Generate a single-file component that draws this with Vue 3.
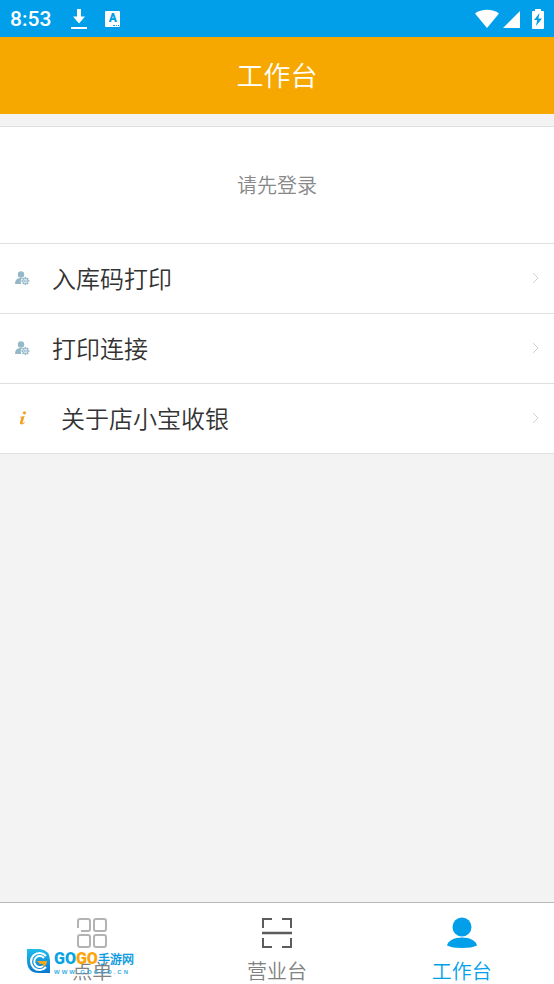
<script setup>
const rows = [
  { label: '入库码打印', icon: 'user' },
  { label: '打印连接', icon: 'user' },
  { label: '关于店小宝收银', icon: 'info' }
]
const teeth = [0, 45, 90, 135, 180, 225, 270, 315]
</script>

<template>
  <div class="app">
    <div class="status">
      <span class="time">8:53</span>
      <svg class="download" width="16" height="20" viewBox="0 0 16 20" fill="#fff">
        <path d="M6 0h4v7.500H14L8 14.500 2 7.500h4zM0 18h16v2H0z" />
      </svg>
      <span class="keyboard"><b>A</b><i></i></span>
      <svg class="signals" width="70" height="20" viewBox="0 0 70 20" fill="#fff">
        <path d="M0 4.500C6-.5 18-.5 24 4.500L12 19z" />
        <path d="M28 19 45 2v17z" />
        <path d="M58 2h2V0h6v2h2q1 0 1 1v16q0 1-1 1H58q-1 0-1-1V3q0-1 1-1z" />
        <path fill="#019fe9" d="m64.500 4-5.500 7h3.200L61 17l6-7.500h-3.600z" />
      </svg>
    </div>
    <header class="header"><h1>工作台</h1></header>
    <main class="main">
      <a class="login" href="#login">请先登录</a>
      <a v-for="row in rows" :key="row.label" class="row" :class="row.icon" href="#open">
        <svg v-if="row.icon === 'user'" class="row-icon" width="16" height="16" viewBox="0 0 16 16">
          <g fill="#94b8c8">
            <circle cx="7" cy="4.500" r="3.200" />
            <path d="M1 14q0-5.500 5-6h2.500q-2.500 2-1.500 5v1z" />
            <rect v-for="t in teeth" :key="t" x="10.600" y="7" width="1.600" height="2" :transform="`rotate(${t} 11.400 11)`" />
          </g>
          <circle cx="11.400" cy="11" r="2.500" fill="#fff" stroke="#94b8c8" />
          <circle cx="11.400" cy="11" r="1" fill="#fff" stroke="#94b8c8" />
        </svg>
        <svg v-else class="row-icon" width="16" height="16" viewBox="0 0 16 16" fill="#f5a11d">
          <circle cx="10.500" cy="2.800" r="1.600" />
          <path d="M6.300 6.700q2.300-.2 4.400-1L8.600 12.500q-.3 1 .5.600l1.400-1.400.5.400q-1.700 2.700-3.800 2.500-1.700-.3-1.200-2.300l1.300-4.600-1.100-.3z" />
        </svg>
        <span class="label">{{ row.label }}</span>
        <svg class="chevron" width="8" height="12" viewBox="0 0 8 12" fill="none" stroke="#d2d2d2">
          <path d="m1 1 5 5-5 5" />
        </svg>
      </a>
    </main>
    <nav class="tabs">
      <a class="tab" href="#order">
        <svg width="32" height="32" viewBox="0 0 32 32" fill="none" stroke="#b3b3b3" stroke-width="2">
          <path d="M2 11V4q0-2 2-2h8q2 0 2 2v8q0 2-2 2H5" />
          <rect x="18" y="2" width="12" height="12" rx="2" />
          <rect x="2" y="18" width="12" height="12" rx="2" />
          <rect x="18" y="18" width="12" height="12" rx="2" />
        </svg>
        <span>点单</span>
      </a>
      <a class="tab" href="#business">
        <svg width="32" height="32" viewBox="0 0 32 32" fill="none" stroke="#5d5b5c" stroke-width="2">
          <path d="M2 11V2h9M21 2h9v9M30 21v9h-9M11 30H2v-9" />
          <path d="M1 16h30" stroke-width="2.500" />
        </svg>
        <span>营业台</span>
      </a>
      <a class="tab active" href="#workbench">
        <svg width="32" height="32" viewBox="0 0 32 32" fill="#019fe9">
          <circle cx="16" cy="10" r="9.500" />
          <path d="M1 28.500C2 24 8 20.500 16 20.500S30 24 31 28.500Q26 31 16 31T1 28.500z" />
        </svg>
        <span>工作台</span>
      </a>
      <div class="mark">
        <svg width="25" height="25" viewBox="0 0 25 25">
          <defs>
            <linearGradient id="drop" x1="0" y1="0" x2="0" y2="1">
              <stop offset="0" stop-color="#21bce9" /><stop offset="1" stop-color="#0878cf" />
            </linearGradient>
          </defs>
          <path d="M1 0h13q10 1 10 12v12H13Q1 24 1 11z" fill="url(#drop)" />
          <path d="M20 7A8.500 8.500 0 1 0 20 18" fill="none" stroke="#fff" stroke-width="2" />
          <path d="M18 9A5.500 5.500 0 1 0 17 17" fill="none" stroke="#fff" stroke-width="2" />
          <path d="M11 12h10q0 4-4 6v-3h-3z" fill="#f7a51c" />
        </svg>
        <div class="mark-text">
          <div class="mark-name"><b class="go">GO</b><b class="go gold">GO</b><b class="cn">手游网</b></div>
          <div class="mark-url">WWW.GOGGO.CN</div>
        </div>
      </div>
    </nav>
  </div>
</template>

<style>
body { margin: 0; }
</style>

<style scoped>
.app {
  display: flex;
  flex-direction: column;
  min-height: 100vh;
  background: #f3f3f3;
  font-family: "Noto Sans CJK SC DemiLight", "Noto Sans CJK SC", sans-serif;
  font-weight: 350;
}
a { color: inherit; text-decoration: none; }
svg { display: block; flex: none; }
.status {
  display: flex;
  align-items: center;
  box-sizing: border-box;
  height: 37px;
  padding: 0 9px 0 10px;
  background: #019fe9;
  color: #fff;
}
.time { font: 500 21px/36px Roboto, sans-serif; }
.download { margin-left: 20px; }
.keyboard {
  position: relative;
  width: 15px;
  height: 16px;
  margin-left: 18px;
  border-radius: 1px;
  background: #fff;
  color: #019fe9;
  text-align: center;
}
.keyboard b { display: block; font: 900 12px/15px Roboto, sans-serif; }
.keyboard i {
  position: absolute;
  right: 1px;
  bottom: 1px;
  width: 6px;
  border-bottom: 1px dotted #019fe9;
}
.signals { margin-left: auto; }
.header {
  display: flex;
  align-items: center;
  justify-content: center;
  box-sizing: border-box;
  height: 77px;
  padding-bottom: 2px;
  background: #f7a800;
  color: #fff;
}
h1 { margin: 0; font-size: 27px; font-weight: 350; line-height: 40px; }
.main { flex: 1; padding-top: 12px; }
.login {
  display: flex;
  align-items: center;
  justify-content: center;
  box-sizing: border-box;
  height: 118px;
  padding-bottom: 2px;
  border-top: 1px solid #e0e0e0;
  border-bottom: 1px solid #e0e0e0;
  background: #fff;
  color: #888;
  font-size: 20px;
}
.row {
  display: flex;
  align-items: center;
  box-sizing: border-box;
  height: 70px;
  padding: 0 14px 2px;
  border-bottom: 1px solid #e0e0e0;
  background: #fff;
  color: #333;
}
.label { flex: 1; margin-left: 22px; font-size: 24px; line-height: 36px; }
.info .label { margin-left: 31px; }
.tabs {
  position: relative;
  display: flex;
  box-sizing: border-box;
  height: 82px;
  border-top: 1px solid #b8b8b8;
  background: #fff;
}
.tab {
  display: flex;
  flex: 1;
  flex-direction: column;
  align-items: center;
  padding-top: 14px;
  gap: 8px;
  color: #808080;
  font-size: 20px;
  line-height: 28px;
}
.active { color: #019fe9; }
.mark {
  position: absolute;
  left: 26px;
  top: 46px;
  display: flex;
  gap: 3px;
}
.mark-name { display: flex; align-items: center; height: 20px; }
.go { color: #08a5e2; font: 900 16px/20px Roboto, sans-serif; }
.gold { color: #fba50b; }
.cn { color: #109be0; font-size: 12px; font-weight: 900; line-height: 20px; }
.mark-url { color: #38aee4; font: 700 6px/7px "Liberation Sans", sans-serif; letter-spacing: 2px; }
</style>
